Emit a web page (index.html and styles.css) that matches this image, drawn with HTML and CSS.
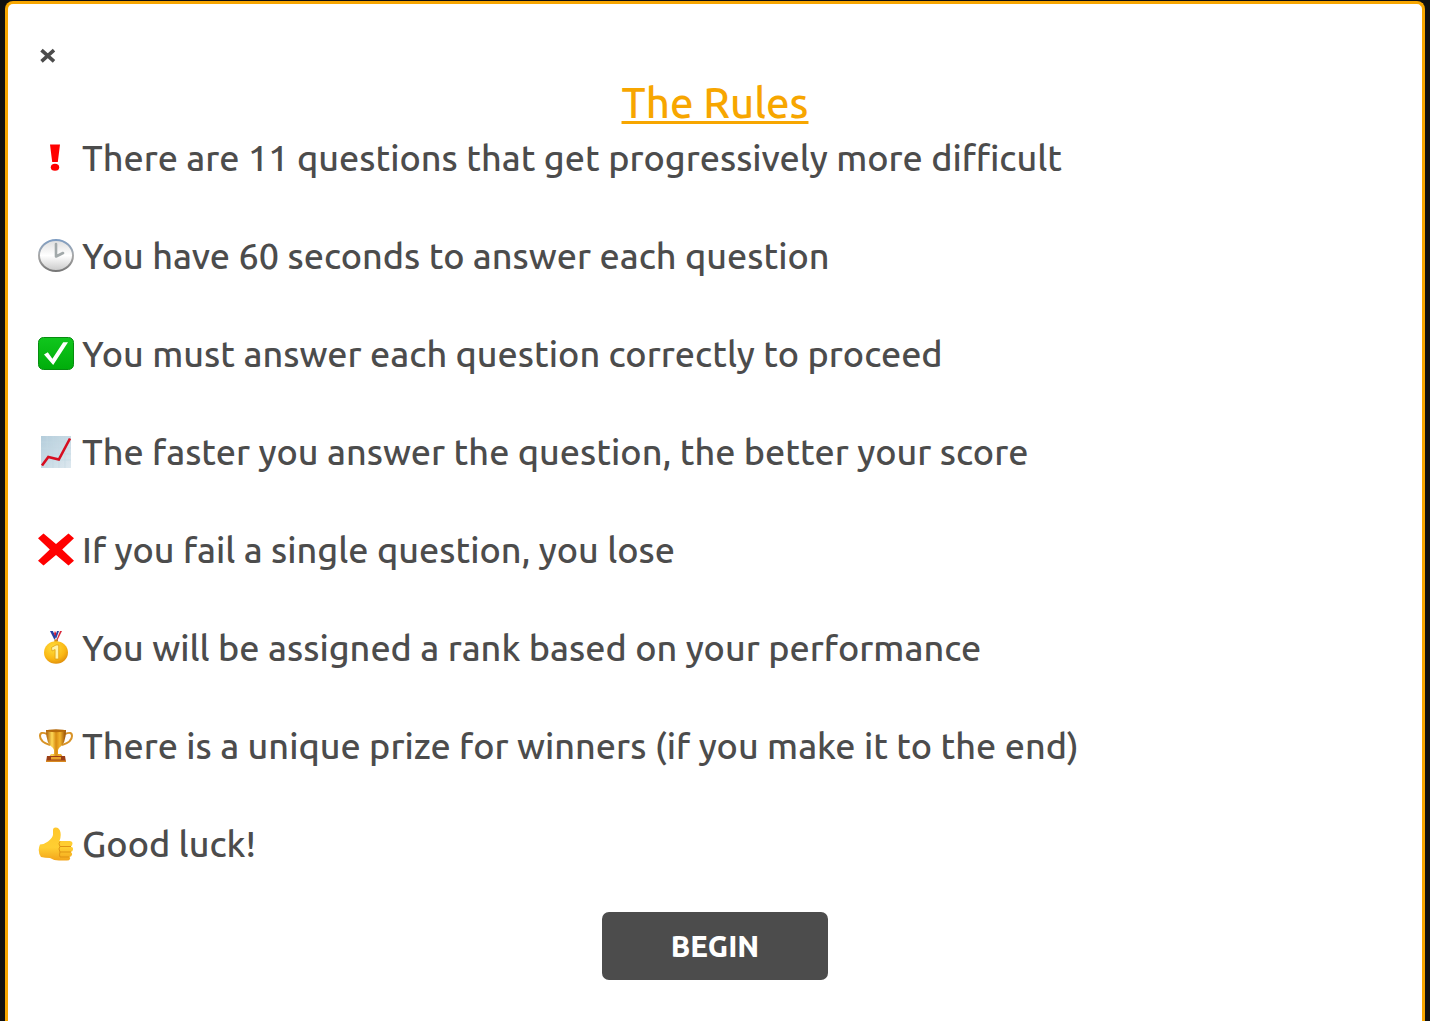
FILE: index.html
```html
<!DOCTYPE html>
<html lang="en">
<head>
<meta charset="utf-8">
<meta name="viewport" content="width=device-width, initial-scale=1">
<title>The Rules</title>
<link rel="stylesheet" href="styles.css">
</head>
<body>
<div class="backdrop">
<main class="panel">
  <button class="close" type="button" aria-label="Close">
    <svg viewBox="0 0 20 20" aria-hidden="true"><path d="M3.500 4.200 16 15.400M16 4.200 3.500 15.400" fill="none" stroke="#4c4c4c" stroke-width="3.600"/></svg>
  </button>
  <h1 class="title">The Rules</h1>
  <ul class="rules">
    <li class="rule">
      <svg class="icon" viewBox="0 0 36 36" aria-hidden="true"><path d="M12 4.500h10L19.800 22h-5.600z" fill="#f00"/><ellipse cx="17" cy="27.300" rx="4.200" ry="3.500" fill="#f00"/></svg>
      <span>There are 11 questions that get progressively more difficult</span>
    </li>
    <li class="rule">
      <svg class="icon" viewBox="0 0 36 36" aria-hidden="true">
        <defs>
          <linearGradient id="rim" x1="0" y1="0" x2="0" y2="1"><stop offset="0" stop-color="#7e9dc2"/><stop offset=".5" stop-color="#aaa"/><stop offset="1" stop-color="#777"/></linearGradient>
          <linearGradient id="face" x1="0" y1="0" x2="0" y2="1"><stop offset="0" stop-color="#dedede"/><stop offset=".5" stop-color="#fff"/><stop offset="1" stop-color="#c9c9c9"/></linearGradient>
        </defs>
        <ellipse cx="18" cy="17.500" rx="17" ry="15.500" fill="url(#face)" stroke="url(#rim)" stroke-width="2"/>
        <path d="M18 6v12.500l7-3.500" fill="none" stroke="#a2a9aa" stroke-width="2.600" stroke-linecap="round" stroke-linejoin="round"/>
      </svg>
      <span>You have 60 seconds to answer each question</span>
    </li>
    <li class="rule">
      <svg class="icon" viewBox="0 0 36 36" aria-hidden="true">
        <defs><linearGradient id="green" x1="0" y1="0" x2="0" y2="1"><stop offset="0" stop-color="#10c61d"/><stop offset="1" stop-color="#00ad0b"/></linearGradient></defs>
        <rect x=".5" y="1.500" width="35" height="32" rx="5" fill="url(#green)" stroke="#078c10"/>
        <path d="M6 18.500l3.800-2.200 4.600 6.400L25.200 6.300h4.800L15.200 29z" fill="#fff"/>
      </svg>
      <span>You must answer each question correctly to proceed</span>
    </li>
    <li class="rule">
      <svg class="icon" viewBox="0 0 36 36" aria-hidden="true">
        <defs><linearGradient id="sheet" x1="0" y1="0" x2="1" y2="1"><stop offset="0" stop-color="#b4cddb"/><stop offset="1" stop-color="#dde8ef"/></linearGradient></defs>
        <rect x="3" y="2" width="30" height="32" fill="url(#sheet)"/>
        <path d="M9 2v32M15 2v32M21 2v32M27 2v32M3 8h30M3 14h30M3 20h30M3 26h30" stroke="#c3d8e3" stroke-width=".6"/>
        <path d="M4 31.500l6.300-8.500L20.800 25.500 32 4.500" fill="none" stroke="#d70e20" stroke-width="2.600"/>
      </svg>
      <span>The faster you answer the question, the better your score</span>
    </li>
    <li class="rule">
      <svg class="icon" viewBox="0 0 36 36" aria-hidden="true"><path d="M0 6.200 5.500 1.500 18 12 30.500 1.500 36 6.200 24.200 17.500 36 28.800 30.500 33.500 18 23 5.500 33.500 0 28.800 11.800 17.500z" fill="#f00"/></svg>
      <span>If you fail a single question, you lose</span>
    </li>
    <li class="rule">
      <svg class="icon" viewBox="0 0 36 36" aria-hidden="true">
        <defs><radialGradient id="medal" cx=".4" cy=".3" r=".75"><stop offset="0" stop-color="#ffdf3c"/><stop offset=".65" stop-color="#fab714"/><stop offset="1" stop-color="#dd8b0c"/></radialGradient></defs>
        <path d="M12 1l5 10h3L15 1z" fill="#2442a5"/><path d="M15 1l4 8 1-2-3-6z" fill="#eee"/><path d="M17 1l2 4-1 3-2-4z" fill="#d81730"/>
        <path d="M24 1l-5 10h-2l4-10z" fill="#d92b3c"/><path d="M22 1l-4 10h-2l4-10z" fill="#fff"/><path d="M21 1l-3 8-1-2 2-6z" fill="#2442a5"/>
        <circle cx="18" cy="11" r="1.800" fill="#d68b17"/>
        <ellipse cx="18" cy="22.500" rx="12" ry="11.300" fill="url(#medal)"/>
        <path d="M13.500 17.500l4.500-2.500h2.700V29h-3.600v-9.500L14 21z" fill="#fff3a8" stroke="#dc9909" stroke-width=".7"/>
      </svg>
      <span>You will be assigned a rank based on your performance</span>
    </li>
    <li class="rule">
      <svg class="icon" viewBox="0 0 36 36" aria-hidden="true">
        <defs><linearGradient id="gold" x1="0" y1="0" x2="1" y2="0"><stop offset="0" stop-color="#a95a05"/><stop offset=".3" stop-color="#ffda57"/><stop offset=".5" stop-color="#d88c12"/><stop offset=".7" stop-color="#f3b52c"/><stop offset="1" stop-color="#914905"/></linearGradient></defs>
        <path d="M9 6Q2 3 2 8q0 6 10 9M27 6q7-3 7 2 0 6-10 9" fill="none" stroke="#d89327" stroke-width="2"/>
        <path d="M8 2h20q0 14-7 18l-1 2v4h3l2 3H11l2-3h3v-4l-1-2Q8 16 8 2z" fill="url(#gold)"/>
        <ellipse cx="18" cy="2.800" rx="10" ry="1.500" fill="#b66b0b"/>
        <path d="M9 28h18l1 6H8z" fill="#9c3f16"/><path d="M8 32.500h20V34H8z" fill="#d98a20"/><path d="M13 29h10v2.500H13z" fill="#e8a32a"/>
      </svg>
      <span>There is a unique prize for winners (if you make it to the end)</span>
    </li>
    <li class="rule">
      <svg class="icon" viewBox="0 0 36 36" aria-hidden="true">
        <defs><linearGradient id="skin" x1="0" y1="0" x2="0" y2="1"><stop offset="0" stop-color="#ffc62b"/><stop offset=".6" stop-color="#ffcf32"/><stop offset="1" stop-color="#f3a51b"/></linearGradient></defs>
        <path d="M2 18.500q4 0 8-3 5-4 5-7V4q0-2.500 2.500-2.500 4 0 5 5 .7 4-1 8.500h10q3 .2 3 2.500t-2 3q3 .5 2.500 3-.2 2-2.500 2.500 2 .7 1.500 2.700-.4 2-2.500 2.300 1 .8.500 2-.5 1.500-3 1.500H21q-5 0-9-2.500-5 0-9-1-4-6-1-12.500z" fill="url(#skin)"/>
        <path d="M22 20.500h11M22 26h11M22 31h9M22 15.500q-2 2 0 5-2 2 0 5.500-1 3 0 5" fill="none" stroke="#df9313" stroke-width="1"/>
      </svg>
      <span>Good luck!</span>
    </li>
  </ul>
  <button class="begin" type="button">BEGIN</button>
</main>
</div>
</body>
</html>
```
FILE: styles.css
```css
* {
  box-sizing: border-box;
}

body {
  margin: 0;
  background: #fff;
  color: #4c4c4c;
  font-family: Ubuntu, "Noto Sans", "Open Sans", sans-serif;
}

.backdrop {
  padding: 1px 5px 0;
  background: #111;
}

.panel {
  display: flex;
  flex-direction: column;
  padding: 32px 30px 41px;
  border: 3px solid #f7a600;
  border-bottom: 0;
  border-radius: 8px 8px 0 0;
  background: #fff;
}

.close {
  display: flex;
  align-items: center;
  align-self: flex-start;
  height: 40px;
  padding: 0;
  border: 0;
  background: none;
  cursor: pointer;
}

.close svg {
  width: 20px;
  height: 20px;
}

.title {
  margin: 0 0 4px;
  color: #f7a600;
  font-size: 42px;
  font-weight: 500;
  line-height: 54px;
  text-align: center;
  text-decoration: underline;
  text-decoration-thickness: 3px;
  text-underline-offset: 3px;
}

.rules {
  display: flex;
  flex-direction: column;
  gap: 50px;
  margin: 0;
  padding: 0;
  list-style: none;
}

.rule {
  display: flex;
  align-items: center;
  gap: 8px;
  font-size: 36px;
  font-weight: 500;
  line-height: 48px;
}

.icon {
  flex: none;
  width: 36px;
  height: 36px;
}

.begin {
  align-self: center;
  width: 226px;
  height: 68px;
  margin-top: 44px;
  border: 0;
  border-radius: 7px;
  background: #4c4c4c;
  color: #fff;
  font-family: inherit;
  font-size: 29px;
  font-weight: 800;
  cursor: pointer;
}
```
